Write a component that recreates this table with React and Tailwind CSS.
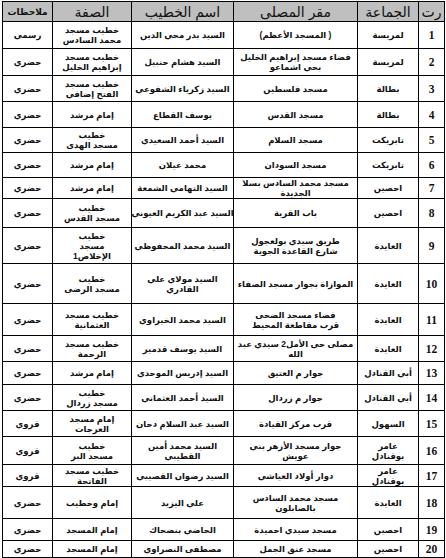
const rows = [
  { n: "1", h: "h-[27px]", j: ["لمريسة"], m: ["( المسجد الأعظم)"], k: ["السيد بدر محي الدين"], s: ["خطيب مسجد", "محمد السادس"], r: "رسمي" },
  { n: "2", h: "h-[27px]", j: ["لمريسة"], m: ["فضاء مسجد إبراهيم الخليل", "بحي اشماعو"], k: ["السيد هشام حنبيل"], s: ["خطيب مسجد", "إبراهيم الخليل"], r: "حضري" },
  { n: "3", h: "h-[26px]", j: ["بطالة"], m: ["مسجد فلسطين"], k: ["السيد زكرياء الشفوعي"], s: ["خطيب مسجد", "الفتح إضافي"], r: "حضري" },
  { n: "4", h: "h-[26px]", j: ["بطالة"], m: ["مسجد القدس"], k: ["يوسف القطاع"], s: ["إمام مرشد"], r: "حضري" },
  { n: "5", h: "h-[25px]", j: ["تابريكت"], m: ["مسجد السلام"], k: ["السيد أحمد السعيدي"], s: ["خطيب", "مسجد الهدى"], r: "حضري" },
  { n: "6", h: "h-[25px]", j: ["تابريكت"], m: ["مسجد السودان"], k: ["محمد غيلان"], s: ["إمام مرشد"], r: "حضري" },
  { n: "7", h: "h-[20px]", j: ["احصين"], m: ["مسجد محمد السادس بسلا", "الجديدة"], k: ["السيد التهامي الشمعة"], s: ["إمام مرشد"], r: "حضري" },
  { n: "8", h: "h-[29px]", j: ["احصين"], m: ["باب القرية"], k: ["السيد عبد الكريم العيوني"], s: ["خطيب", "مسجد القدس"], r: "حضري" },
  { n: "9", h: "h-[36px]", j: ["العايدة"], m: ["طريق سيدي بولعجول", "شارع القاعدة الجوية"], k: ["السيد محمد المحفوظي"], s: ["خطيب", "مسجد", "الإخلاص1"], r: "حضري" },
  { n: "10", h: "h-[40px]", j: ["العايدة"], m: ["الموازاة بجوار مسجد الصفاء"], k: ["السيد مولاي علي", "القادري"], s: ["خطيب", "مسجد الرضى"], r: "حضري" },
  { n: "11", h: "h-[32px]", j: ["العايدة"], m: ["فضاء مسجد الضحى", "قرب مقاطعة المحيط"], k: ["السيد محمد الخيراوي"], s: ["خطيب مسجد", "العثمانية"], r: "حضري" },
  { n: "12", h: "h-[26px]", j: ["العايدة"], m: ["مصلى حي الأمل2 سيدي عبد", "الله"], k: ["السيد يوسف قدمير"], s: ["خطيب مسجد", "الرحمة"], r: "حضري" },
  { n: "13", h: "h-[23px]", j: ["أبي القنادل"], m: ["جوار م العتيق"], k: ["السيد إدريس الموحدي"], s: ["إمام مرشد"], r: "حضري" },
  { n: "14", h: "h-[26px]", j: ["أبي القنادل"], m: ["جوار م زردال"], k: ["السيد أحمد العثماني"], s: ["خطيب", "مسجد زردال"], r: "حضري" },
  { n: "15", h: "h-[26px]", j: ["السهول"], m: ["قرب مركز القيادة"], k: ["السيد عبد السلام دحان"], s: ["إمام مسجد", "العرجات"], r: "قروي" },
  { n: "16", h: "h-[28px]", j: ["عامر", "بوقنادل"], m: ["جوار مسجد الأزهر بني", "عويش"], k: ["السيد محمد أمين", "القطيبي"], s: ["خطيب", "مسجد البر"], r: "قروي" },
  { n: "17", h: "h-[22px]", j: ["عامر", "بوقنادل"], m: ["دوار أولاد العياشي"], k: ["السيد رضوان القصيبي"], s: ["خطيب مسجد", "الفاتحة"], r: "قروي" },
  { n: "18", h: "h-[32px]", j: ["العايدة"], m: ["مسجد محمد السادس", "بالصابلون"], k: ["علي اليزيد"], s: ["إمام وخطيب"], r: "حضري" },
  { n: "19", h: "h-[22px]", j: ["احصين"], m: ["مسجد سيدي احميدة"], k: ["الحاضي بنضحاك"], s: ["إمام المسجد"], r: "حضري" },
  { n: "20", h: "h-[17px]", j: ["احصين"], m: ["مسجد عنق الجمل"], k: ["مصطفى النصراوي"], s: ["إمام المسجد"], r: "حضري" },
];

const Lines = ({ items }) => (
  <div className="flex flex-col items-center">
    {items.map((t, i) => (
      <span key={i} className="whitespace-nowrap">
        {t}
      </span>
    ))}
  </div>
);

const cell = "border border-black text-center align-middle p-0 overflow-hidden";

export default function App() {
  return (
    <div className="w-[446px] h-[558px] bg-white pt-[1px] pl-[2px]">
      <table
        dir="rtl"
        className="table-fixed border-collapse w-[442px] text-[#111] font-bold text-[8.5px] leading-[10px] font-['Liberation_Sans','DejaVu_Sans',sans-serif]"
      >
        <colgroup>
          <col className="w-[26px]" />
          <col className="w-[61px]" />
          <col className="w-[124px]" />
          <col className="w-[102px]" />
          <col className="w-[79px]" />
          <col className="w-[50px]" />
        </colgroup>
        <thead>
          <tr className="h-[20px] bg-[#bfbfbf] text-[14px] leading-[14px]">
            <th className={`${cell} font-normal`}>رت</th>
            <th className={`${cell} font-normal`}>الجماعة</th>
            <th className={`${cell} font-normal`}>مقر المصلى</th>
            <th className={`${cell} font-normal`}>اسم الخطيب</th>
            <th className={`${cell} font-normal`}>الصفة</th>
            <th className={`${cell} font-bold text-[9px]`}>ملاحظات</th>
          </tr>
        </thead>
        <tbody>
          {rows.map((row) => (
            <tr key={row.n} className={row.h}>
              <td className={`${cell} font-['Liberation_Serif',serif] text-[11.5px]`}>{row.n}</td>
              <td className={cell}>
                <Lines items={row.j} />
              </td>
              <td className={cell}>
                <Lines items={row.m} />
              </td>
              <td className={cell}>
                <Lines items={row.k} />
              </td>
              <td className={cell}>
                <Lines items={row.s} />
              </td>
              <td className={cell}>{row.r}</td>
            </tr>
          ))}
        </tbody>
      </table>
    </div>
  );
}
